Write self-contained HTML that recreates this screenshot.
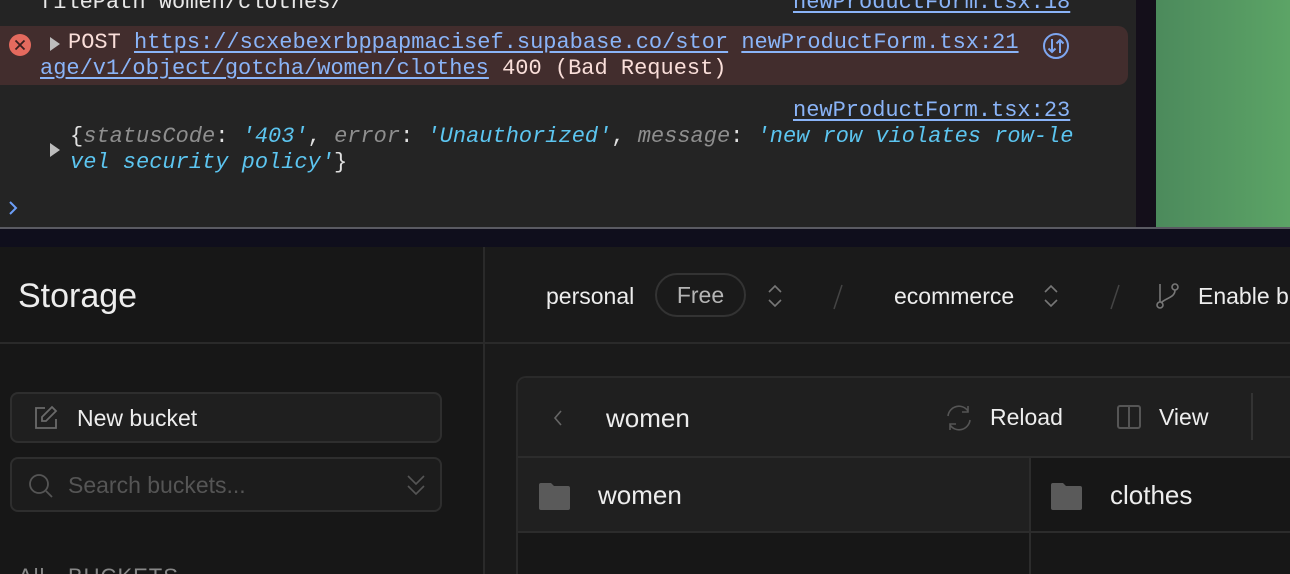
<!DOCTYPE html>
<html style="overflow:hidden;width:1290px;height:574px"><head><meta charset="utf-8"><style>
*{margin:0;padding:0;box-sizing:border-box}
body{width:1290px;height:574px;overflow:hidden;background:#1c1c1c;position:relative;font-family:"Liberation Sans",sans-serif}
.a{position:absolute}
.mono{font-family:"Liberation Mono",monospace;font-size:22px;white-space:pre;line-height:26px}
.lnk{color:#8ab4f8;text-decoration:underline;text-underline-offset:3px}
.sans{font-family:"Liberation Sans",sans-serif;color:#ededed}
</style></head><body>
<div class="a" style="left:0;top:0;width:1136px;height:228px;background:#242424"></div>
<div class="a" style="left:1136px;top:0;width:20px;height:228px;background:#140f1a"></div>
<div class="a" style="left:1156px;top:0;width:134px;height:228px;background:linear-gradient(90deg,#4c8a5c,#5ca466)"></div>
<div class="a" style="left:0;top:227px;width:1290px;height:2px;background:#5a5a62"></div>
<div class="a" style="left:0;top:229px;width:1290px;height:18px;background:#0f0e1c"></div>

<div class="a mono" style="left:40px;top:-10px;color:#e8e8e8">filePath women/clothes/</div>
<div class="a mono lnk" style="left:793px;top:-10px">newProductForm.tsx:18</div>

<div class="a" style="left:0;top:26px;width:1128px;height:59px;background:#422d2d;border-radius:0 10px 10px 0"></div>
<svg class="a" style="left:8px;top:33px" width="24" height="24" viewBox="0 0 24 24"><circle cx="12" cy="12" r="11" fill="#e46a5e"/><path d="M7.5 7.5l9 9M16.5 7.5l-9 9" stroke="#3a1f1f" stroke-width="1.8"/></svg>
<div class="a" style="left:50px;top:37px;width:0;height:0;border-left:10px solid #bdbdbd;border-top:7px solid transparent;border-bottom:7px solid transparent"></div>
<div class="a mono" style="left:68px;top:30px;color:#f9ded9">POST <span class="lnk">https://scxebexrbppapmacisef.supabase.co/stor</span> <span class="lnk">newProductForm.tsx:21</span></div>
<div class="a mono" style="left:40px;top:56px;color:#f9ded9"><span class="lnk">age/v1/object/gotcha/women/clothes</span> 400 (Bad Request)</div>
<svg class="a" style="left:1042px;top:32px" width="28" height="28" viewBox="0 0 28 28" fill="none" stroke="#7ea6f0" stroke-width="2"><circle cx="14" cy="14" r="12"/><path d="M10 7v13M6.5 16.5L10 20l3.5-3.5M18 21V8M14.5 11.5L18 8l3.5 3.5"/></svg>

<div class="a mono lnk" style="left:793px;top:98px">newProductForm.tsx:23</div>
<div class="a" style="left:50px;top:143px;width:0;height:0;border-left:10px solid #bdbdbd;border-top:7px solid transparent;border-bottom:7px solid transparent"></div>
<div class="a mono" style="left:70px;top:124px;color:#e0e0e0">{<i style="color:#8e8e8e">statusCode</i>: <i style="color:#5cc5f0">'403'</i>, <i style="color:#8e8e8e">error</i>: <i style="color:#5cc5f0">'Unauthorized'</i>, <i style="color:#8e8e8e">message</i>: <i style="color:#5cc5f0">'new row violates row-le</i></div>
<div class="a mono" style="left:70px;top:150px;color:#e0e0e0"><i style="color:#5cc5f0">vel security policy'</i>}</div>
<svg class="a" style="left:7px;top:199px" width="12" height="18" viewBox="0 0 12 18" fill="none" stroke="#6c9ef8" stroke-width="2"><path d="M3 3l6 6-6 6"/></svg>

<div class="a" style="left:0;top:247px;width:483px;height:327px;background:#171717"></div>
<div class="a" style="left:483px;top:247px;width:2px;height:327px;background:#2a2a2a"></div>
<div class="a" style="left:485px;top:247px;width:805px;height:96px;background:#1a1a1a"></div>
<div class="a" style="left:0;top:342px;width:1290px;height:2px;background:#2a2a2a"></div>
<div class="a" style="left:485px;top:344px;width:805px;height:230px;background:#1a1a1a"></div>
<div class="a sans" style="left:18px;top:277px;font-size:34px">Storage</div>

<div class="a sans" style="left:546px;top:283px;font-size:23px">personal</div>
<div class="a" style="left:655px;top:273px;width:91px;height:44px;border:2px solid #333;border-radius:22px;color:#b5b5b5;font-size:23px;text-align:center;line-height:40px">Free</div>
<svg class="a" style="left:766px;top:283px" width="18" height="26" viewBox="0 0 18 26" fill="none" stroke="#777" stroke-width="1.6"><path d="M3 9l6-6 6 6M3 17l6 6 6-6"/></svg>
<svg class="a" style="left:830px;top:283px" width="16" height="28" viewBox="0 0 16 28" stroke="#444" stroke-width="1.5"><path d="M12 2L4 26"/></svg>
<div class="a sans" style="left:894px;top:283px;font-size:23px">ecommerce</div>
<svg class="a" style="left:1042px;top:283px" width="18" height="26" viewBox="0 0 18 26" fill="none" stroke="#777" stroke-width="1.6"><path d="M3 9l6-6 6 6M3 17l6 6 6-6"/></svg>
<svg class="a" style="left:1107px;top:283px" width="16" height="28" viewBox="0 0 16 28" stroke="#444" stroke-width="1.5"><path d="M12 2L4 26"/></svg>
<svg class="a" style="left:1155px;top:282px" width="26" height="28" viewBox="0 0 26 28" fill="none" stroke="#777" stroke-width="1.6"><circle cx="5" cy="23" r="3"/><circle cx="20" cy="5" r="3"/><path d="M5 2v18M20 8c0 8-10 8-14 13"/></svg>
<div class="a sans" style="left:1198px;top:283px;font-size:23px;white-space:nowrap">Enable b</div>

<div class="a" style="left:10px;top:392px;width:432px;height:51px;border:2px solid #2e2e2e;border-radius:8px;background:#1f1f1f"></div>
<svg class="a" style="left:33px;top:405px" width="26" height="26" viewBox="0 0 26 26" fill="none" stroke="#6a6a6a" stroke-width="1.8"><path d="M12 3H3v20h20v-9"/><path d="M19 2l4 4-10 10H9v-4z"/></svg>
<div class="a sans" style="left:77px;top:405px;font-size:23px">New bucket</div>
<div class="a" style="left:10px;top:457px;width:432px;height:55px;border:2px solid #2e2e2e;border-radius:8px;background:#1c1c1c"></div>
<svg class="a" style="left:28px;top:473px" width="26" height="26" viewBox="0 0 26 26" fill="none" stroke="#555" stroke-width="1.8"><circle cx="11" cy="11" r="9"/><path d="M18 18l6 6"/></svg>
<div class="a" style="left:68px;top:472px;font-size:23px;color:#555">Search buckets...</div>
<svg class="a" style="left:405px;top:473px" width="22" height="24" viewBox="0 0 22 24" fill="none" stroke="#555" stroke-width="1.6"><path d="M3 3l8 8 8-8M3 13l8 8 8-8"/></svg>
<div class="a" style="left:18px;top:564px;font-size:22px;color:#888;letter-spacing:1px">All · BUCKETS</div>

<div class="a" style="left:516px;top:376px;width:780px;height:198px;border:2px solid #2a2a2a;border-bottom:none;border-radius:10px 0 0 0;background:#171717;overflow:hidden">
 <div class="a" style="left:0;top:0;width:780px;height:80px;background:#1f1f1f;border-bottom:2px solid #2c2c2c"></div>
 <div class="a" style="left:0;top:80px;width:512px;height:74px;background:#202020"></div>
 <div class="a" style="left:511px;top:80px;width:2px;height:140px;background:#2c2c2c"></div>
 <div class="a" style="left:0;top:153px;width:780px;height:2px;background:#2c2c2c"></div>
</div>
<svg class="a" style="left:551px;top:408px" width="14" height="20" viewBox="0 0 14 20" fill="none" stroke="#666" stroke-width="1.6"><path d="M10 3L4 10l6 7"/></svg>
<div class="a sans" style="left:606px;top:403px;font-size:26px">women</div>
<svg class="a" style="left:944px;top:404px" width="30" height="28" viewBox="0 0 30 28" fill="none" stroke="#555" stroke-width="1.6"><path d="M4 12a11 11 0 0 1 20-5M26 16a11 11 0 0 1-20 5"/><path d="M24 2v6h-6M6 26v-6h6"/></svg>
<div class="a sans" style="left:990px;top:404px;font-size:23px">Reload</div>
<div class="a" style="left:1117px;top:405px;width:24px;height:24px;border:2px solid #555;border-radius:3px"><div style="margin-left:9px;width:2px;height:20px;background:#555"></div></div>
<div class="a sans" style="left:1159px;top:404px;font-size:23px">View</div>
<div class="a" style="left:1251px;top:393px;width:2px;height:47px;background:#333"></div>
<svg class="a" style="left:537px;top:481px" width="34" height="30" viewBox="0 0 34 30"><path d="M2 4q0-2 2-2h10l3 3h14q2 0 2 2v20q0 2-2 2H4q-2 0-2-2z" fill="#5a5a5a"/></svg>
<div class="a sans" style="left:598px;top:480px;font-size:26px">women</div>
<svg class="a" style="left:1049px;top:481px" width="34" height="30" viewBox="0 0 34 30"><path d="M2 4q0-2 2-2h10l3 3h14q2 0 2 2v20q0 2-2 2H4q-2 0-2-2z" fill="#5a5a5a"/></svg>
<div class="a sans" style="left:1110px;top:480px;font-size:26px">clothes</div>
</body></html>
